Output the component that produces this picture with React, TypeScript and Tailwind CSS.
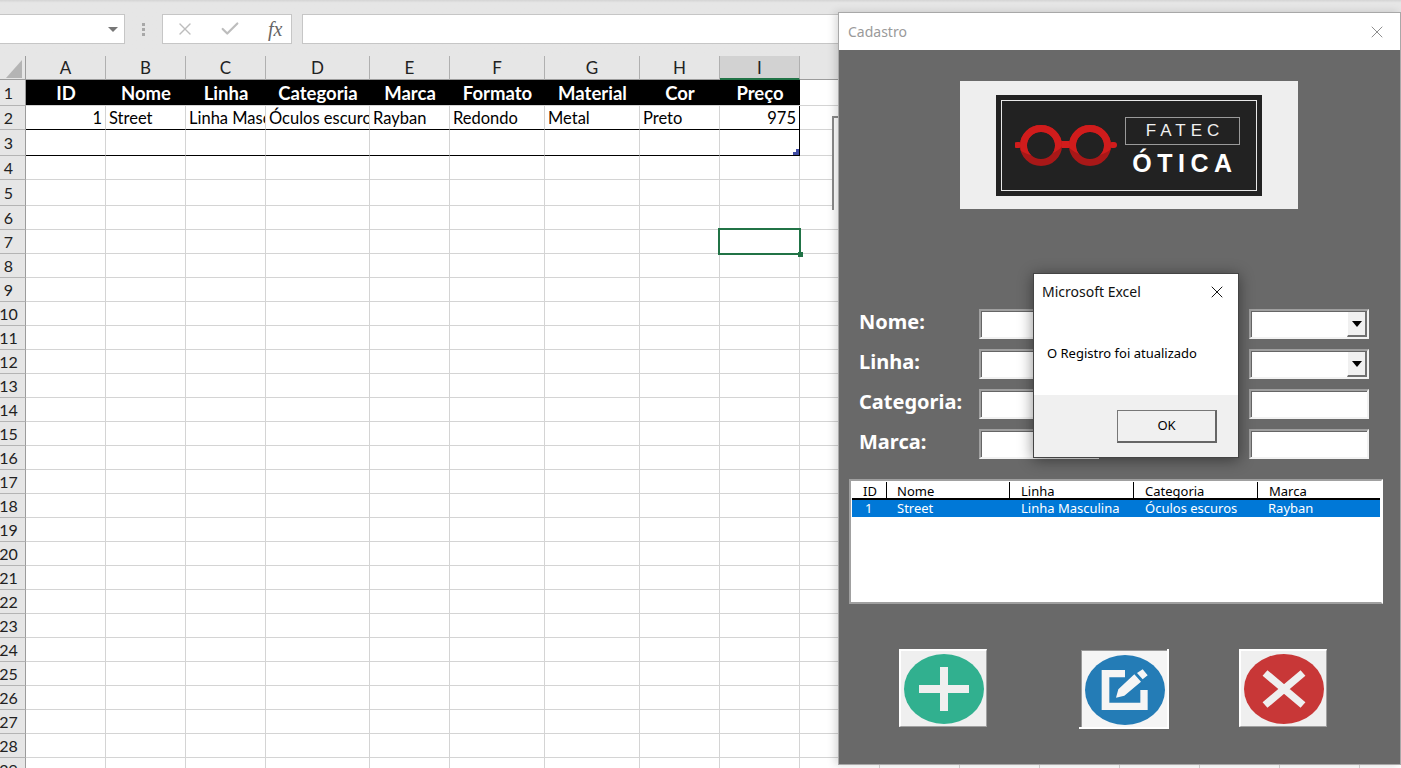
import { X, Check } from 'lucide-react';

const columns = [
  { name: 'A', width: 'w-[80px]', title: 'ID', value: '1', right: true },
  { name: 'B', width: 'w-[80px]', title: 'Nome', value: 'Street' },
  { name: 'C', width: 'w-[80px]', title: 'Linha', value: 'Linha Masculina' },
  { name: 'D', width: 'w-[104px]', title: 'Categoria', value: 'Óculos escuros' },
  { name: 'E', width: 'w-[80px]', title: 'Marca', value: 'Rayban' },
  { name: 'F', width: 'w-[95px]', title: 'Formato', value: 'Redondo' },
  { name: 'G', width: 'w-[95px]', title: 'Material', value: 'Metal' },
  { name: 'H', width: 'w-[80px]', title: 'Cor', value: 'Preto' },
  { name: 'I', width: 'w-[80px]', title: 'Preço', value: '975', right: true },
];

const extraColumns = ['J', 'K', 'L', 'M', 'N', 'O', 'P', 'Q'];

const rowNumbers = Array.from({ length: 29 }, (_, i) => i + 1);

const rowHeight = (row: number) =>
  row === 1 || row === 3 || row === 5 ? 'h-[26px]' : 'h-[24px]';

const SheetRow = ({ row }: { row: number }) => {
  const inTable = row === 2 || row === 3;
  return (
    <div className={`flex ${rowHeight(row)}`}>
      <div className="w-[26px] shrink-0 pr-[8px] bg-[#e6e6e6] border-r border-r-[#9c9c9c] border-b border-b-[#b4b4b4] flex items-center justify-center text-[16px] text-[#222]">
        {row}
      </div>
      {columns.map((col) => {
        if (row === 1) {
          return (
            <div
              key={col.name}
              className={`${col.width} shrink-0 pt-[3px] bg-black text-white font-bold text-[18.5px] flex items-center justify-center border-b border-b-[#d4d4d4] whitespace-nowrap`}
            >
              {col.title}
            </div>
          );
        }
        return (
          <div
            key={col.name}
            className={`${col.width} shrink-0 border-r border-b overflow-hidden whitespace-nowrap text-[16.5px] text-black pl-[3px] pr-[3px] pt-[1px] flex items-center ${
              col.right ? 'justify-end' : ''
            } ${inTable ? 'border-b-black' : 'border-b-[#d4d4d4]'} ${
              inTable && col.name === 'I' ? 'border-r-black' : 'border-r-[#d4d4d4]'
            }`}
          >
            {row === 2 ? col.value : ''}
          </div>
        );
      })}
      {extraColumns.map((name) => (
        <div key={name} className="w-[80px] shrink-0 border-r border-b border-[#d4d4d4]" />
      ))}
    </div>
  );
};

const Sheet = () => (
  <div className="relative">
    <div className="flex h-[24px] bg-[#e6e6e6]">
      <div className="w-[26px] shrink-0 border-r border-r-[#9c9c9c] border-b border-b-[#9c9c9c] relative">
        <svg width="25" height="23" viewBox="0 0 25 23" className="block">
          <path d="M22 4v18H6z" fill="#b4b4b4" />
        </svg>
      </div>
      {columns.map((col) => (
        <div
          key={col.name}
          className={`${col.width} shrink-0 pt-[1px] flex items-center justify-center text-[17px] text-[#222] border-r border-r-[#b0b0b0] ${
            col.name === 'I'
              ? 'bg-[#d2d2d2] border-b-2 border-b-[#217346]'
              : 'border-b border-b-[#9c9c9c]'
          }`}
        >
          {col.name}
        </div>
      ))}
      {extraColumns.map((name) => (
        <div key={name} className="w-[80px] shrink-0 border-b border-b-[#9c9c9c] border-r border-r-[#b0b0b0]" />
      ))}
    </div>
    {rowNumbers.map((row) => (
      <SheetRow key={row} row={row} />
    ))}
    {/* table resize handle */}
    <svg width="6" height="6" viewBox="0 0 6 6" className="absolute left-[793px] top-[93px]">
      <path d="M3 0h3v6H0V3h3z" fill="#3f4ba3" />
    </svg>
    {/* selected cell I7 */}
    <div className="absolute left-[718px] top-[172px] w-[83px] h-[27px] border-2 border-[#217346]">
      <div className="absolute -right-[4px] -bottom-[4px] w-[5px] h-[5px] bg-[#217346]" />
    </div>
    {/* whatever sits on the sheet behind the form */}
    <div className="absolute left-[832px] top-[60px] w-[10px] h-[94px] border-l-2 border-t-2 border-[#8a8a8a] bg-white" />
    <div className="absolute left-[1398px] top-[84px] w-[3px] h-[8px] border-y-2 border-black" />
  </div>
);

const FormulaBar = () => (
  <div className="h-[56px] bg-[#e6e6e6] pt-[14px] flex items-start bg-gradient-to-b from-[#d4d4d4] from-0% to-[#e6e6e6] to-[5%]">
    <div className="w-[125px] h-[30px] bg-white border border-[#c6c6c6] border-l-0 flex items-center justify-end pr-[6px]">
      <svg width="10" height="5" viewBox="0 0 10 5">
        <path d="M0 0h10L5 5z" fill="#777" />
      </svg>
    </div>
    <div className="w-[37px] h-[30px] flex flex-col items-center justify-center gap-[2px]">
      <span className="w-[3px] h-[3px] bg-[#a8a8a8]" />
      <span className="w-[3px] h-[3px] bg-[#a8a8a8]" />
      <span className="w-[3px] h-[3px] bg-[#a8a8a8]" />
    </div>
    <div className="w-[130px] h-[30px] bg-white border border-[#c6c6c6] flex items-center text-[#bdbdbd]">
      <X size={20} strokeWidth={1.6} className="ml-[12px]" />
      <Check size={22} strokeWidth={2.4} className="ml-[24px]" />
      <span className="ml-[27px] text-[#666] italic text-[20px] font-['Liberation_Serif',serif]">fx</span>
    </div>
    <div className="ml-[10px] w-[1100px] h-[30px] bg-white border border-[#c6c6c6]" />
  </div>
);

const TextInput = ({ combo }: { combo?: boolean }) => (
  <div className="w-[120px] h-[30px] bg-white border-b-2 border-r-2 border-b-[#f2f2f2] border-r-[#f2f2f2] border-t-2 border-l-2 border-t-[#a0a0a0] border-l-[#a0a0a0]">
    <div className="h-full border-t border-l border-[#666] flex justify-end">
      {combo && (
        <div className="w-[20px] bg-[#f0f0f0] border-l border-l-white border-r-2 border-b-2 border-r-[#707070] border-b-[#707070] flex items-center justify-center">
          <svg width="10" height="6" viewBox="0 0 10 6">
            <path d="M0 0h10L5 6z" fill="#000" />
          </svg>
        </div>
      )}
    </div>
  </div>
);

const formRows = [
  { label: 'Nome:', combo: true },
  { label: 'Linha:', combo: true },
  { label: 'Categoria:', combo: false },
  { label: 'Marca:', combo: false },
];

const listColumns = [
  { title: 'ID', value: '1', width: 'w-[35px]', pad: 'pl-[11px]', padValue: 'pl-[13px]' },
  { title: 'Nome', value: 'Street', width: 'w-[123px]', pad: 'pl-[10px]', padValue: 'pl-[10px]' },
  { title: 'Linha', value: 'Linha Masculina', width: 'w-[124px]', pad: 'pl-[11px]', padValue: 'pl-[11px]' },
  { title: 'Categoria', value: 'Óculos escuros', width: 'w-[124px]', pad: 'pl-[11px]', padValue: 'pl-[11px]' },
  { title: 'Marca', value: 'Rayban', width: 'w-[122px]', pad: 'pl-[11px]', padValue: 'pl-[10px]' },
];

const ListBox = () => (
  <div className="ml-[10px] mt-[20px] w-[534px] h-[125px] bg-white border-2 border-[#a0a0a0] border-r-white border-t-[#a0a0a0] p-px font-['Noto_Sans',sans-serif] text-[13px]">
    <div className="flex h-[18px] border-b-2 border-b-black leading-[19px] text-black">
      {listColumns.map((col, i) => (
        <div
          key={col.title}
          className={`${col.width} ${col.pad} ${i < 4 ? 'border-r border-r-black' : ''} h-[17px] overflow-hidden whitespace-nowrap`}
        >
          {col.title}
        </div>
      ))}
    </div>
    <div className="flex h-[17px] bg-[#0078d7] text-white leading-[17px]">
      {listColumns.map((col) => (
        <div key={col.title} className={`${col.width} ${col.padValue} whitespace-nowrap`}>
          {col.value}
        </div>
      ))}
    </div>
  </div>
);

const ActionButtons = () => (
  <div className="ml-[60px] mt-[45px] flex items-start">
    <div className="w-[88px] h-[78px] bg-[#efefef] border-l-2 border-t-2 border-l-white border-t-white border-r border-b border-r-[#a0a0a0] border-b-[#a0a0a0]">
      <svg width="85" height="75" viewBox="0 0 85 75" className="block">
        <ellipse cx="43" cy="38" rx="40" ry="35" fill="#31b08f" />
        <path d="M18 34h50v8H18zM39 16h8v44h-8z" fill="#efefef" />
      </svg>
    </div>
    <div className="ml-[92px] w-[90px] h-[80px] border-r-2 border-b-2 border-white pl-[2px] pt-px">
      <div className="w-full h-full bg-[#f5f5f5] border-l border-t border-[#999]">
        <svg width="85" height="76" viewBox="21 18 255 228" className="block">
          <ellipse cx="150" cy="135" rx="120" ry="105" fill="#247cb6" />
          <path
            d="M80 75h70v22h-47v76h93v-38h22v60H80z M123 158l7-25 48-45 20 22-50 42z M186 84l17-11 15 18-15 12z"
            fill="#f5f5f5"
          />
        </svg>
      </div>
    </div>
    <div className="ml-[70px] w-[88px] h-[78px] bg-[#efefef] border-l-2 border-t-2 border-l-white border-t-white border-r border-b border-r-[#a0a0a0] border-b-[#a0a0a0]">
      <svg width="85" height="75" viewBox="0 0 85 75" className="block">
        <ellipse cx="43" cy="38" rx="40" ry="35" fill="#c83737" />
        <path d="M24 22l38 32M62 22L24 54" stroke="#efefef" strokeWidth="7.5" />
      </svg>
    </div>
  </div>
);

const Glasses = () => (
  <svg width="102" height="50" viewBox="0 0 102 50" className="block mt-[3px] shrink-0">
    <defs>
      <clipPath id="lightLeft">
        <ellipse cx="24" cy="12" rx="29" ry="24" />
      </clipPath>
      <clipPath id="lightRight">
        <ellipse cx="76" cy="12" rx="29" ry="24" />
      </clipPath>
    </defs>
    <rect x="-1" y="22" width="8" height="6" rx="3" fill="#d01c1c" />
    <rect x="94" y="22" width="8" height="6" rx="3" fill="#d01c1c" />
    <rect x="46" y="21" width="10" height="7" fill="#d01c1c" />
    <ellipse cx="26" cy="25.5" rx="17.5" ry="17" fill="none" stroke="#a81818" strokeWidth="7" />
    <ellipse cx="75" cy="25.5" rx="17.5" ry="17" fill="none" stroke="#a81818" strokeWidth="7" />
    <ellipse cx="26" cy="25.5" rx="17.5" ry="17" fill="none" stroke="#d01c1c" strokeWidth="7" clipPath="url(#lightLeft)" />
    <ellipse cx="75" cy="25.5" rx="17.5" ry="17" fill="none" stroke="#d01c1c" strokeWidth="7" clipPath="url(#lightRight)" />
  </svg>
);

const Logo = () => (
  <div className="ml-[121px] w-[338px] h-[128px] bg-[#eeeeee] flex items-center justify-center">
    <div className="w-[266px] h-[101px] bg-[#222] p-[5px]">
      <div className="w-full h-full border border-[#e8e8e8] flex items-start pl-[13px] pt-[16px] font-['Liberation_Sans',sans-serif] text-white">
        <Glasses />
        <div className="ml-[8px] w-[115px] flex flex-col items-center">
          <div className="w-[115px] h-[28px] border border-[#9a9a9a] flex items-center justify-center text-[17px] tracking-[5px] pl-[5px] text-[#f0f0f0]">
            FATEC
          </div>
          <div className="mt-[4px] text-[25px] leading-[28px] font-bold tracking-[5.5px] pl-[5px] whitespace-nowrap">
            ÓTICA
          </div>
        </div>
      </div>
    </div>
  </div>
);

const CadastroWindow = () => (
  <div className="absolute left-[838px] top-[12px] w-[563px] h-[753px] border border-[#a8a8a8] bg-[#696969] shadow-[-3px_0_8px_rgba(0,0,0,0.15)] flex flex-col font-['Noto_Sans',sans-serif]">
    <div className="h-[37px] shrink-0 bg-white flex items-center justify-between pl-[9px] pr-[13px] text-[14px] text-[#9a9a9a]">
      <span>Cadastro</span>
      <X size={20} strokeWidth={1} className="text-[#777]" />
    </div>
    <div className="flex-1 pt-[31px]">
      <Logo />
      <div className="mt-[100px] flex flex-col gap-[10px]">
        {formRows.map((row) => (
          <div key={row.label} className="flex items-center h-[30px]">
            <div className="w-[140px] pl-[20px] -mt-[4px] text-[20px] leading-[26px] font-bold text-white whitespace-nowrap">
              {row.label}
            </div>
            <TextInput />
            <div className="ml-[150px]">
              <TextInput combo={row.combo} />
            </div>
          </div>
        ))}
      </div>
      <ListBox />
      <ActionButtons />
    </div>
  </div>
);

const MessageBox = () => (
  <div className="absolute left-[1033px] top-[273px] w-[206px] h-[185px] bg-white border border-[#444] shadow-[0_2px_14px_rgba(0,0,0,0.45)] flex flex-col font-['Noto_Sans',sans-serif]">
    <div className="h-[36px] flex items-center justify-between pl-[8px] pr-[11px] text-[14px] text-[#111]">
      <span className="-mt-[1px]">Microsoft Excel</span>
      <X size={20} strokeWidth={1.1} className="text-black" />
    </div>
    <div className="flex-1 pl-[13px] pt-[35px] text-[13px] leading-[16px] text-black">O Registro foi atualizado</div>
    <div className="h-[62px] bg-[#f0f0f0] flex justify-end pt-[15px] pr-[21px]">
      <div className="w-[100px] h-[33px] bg-[#f0f0f0] border border-[#777] border-r-2 border-b-2 border-r-[#666] border-b-[#666] flex items-center justify-center text-[13px] text-black">
        OK
      </div>
    </div>
  </div>
);

export default function App() {
  return (
    <div className="relative w-[1401px] h-[768px] overflow-hidden bg-white font-['Lato',sans-serif]">
      <FormulaBar />
      <Sheet />
      <CadastroWindow />
      <MessageBox />
    </div>
  );
}
